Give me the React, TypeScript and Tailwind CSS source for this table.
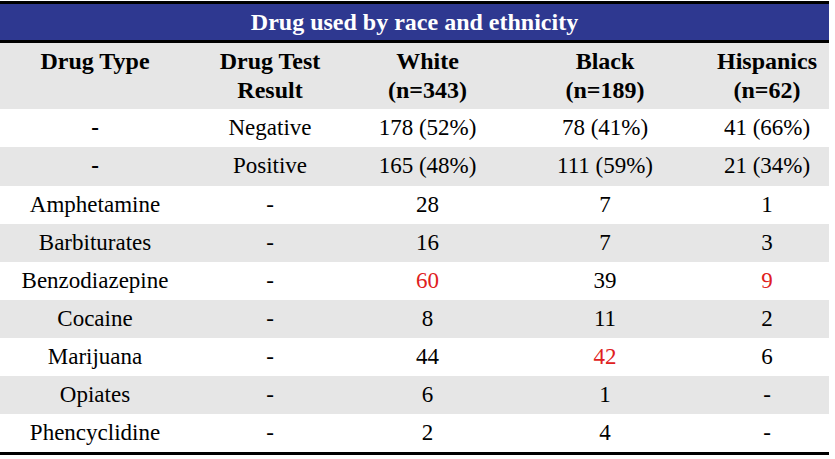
import React from "react";

type Cell = string | { v: string; red?: boolean; bold?: boolean };

const rows: { cells: Cell[]; shade: boolean; tall?: boolean }[] = [
    { cells: [{ v: "-", bold: true }, "Negative", "178 (52%)", "78 (41%)", "41 (66%)"], shade: false },
    { cells: [{ v: "-", bold: true }, "Positive", "165 (48%)", "111 (59%)", "21 (34%)"], shade: true, tall: true },
    { cells: ["Amphetamine", "-", "28", "7", "1"], shade: false },
    { cells: ["Barbiturates", "-", "16", "7", "3"], shade: true },
    { cells: ["Benzodiazepine", "-", { v: "60", red: true }, "39", { v: "9", red: true }], shade: false },
    { cells: ["Cocaine", "-", "8", "11", "2"], shade: true },
    { cells: ["Marijuana", "-", "44", { v: "42", red: true }, "6"], shade: false },
    { cells: ["Opiates", "-", "6", "1", "-"], shade: true },
    { cells: ["Phencyclidine", "-", "2", "4", "-"], shade: false },
];

const cols = "grid grid-cols-[190px_160px_155px_200px_124px]";

export default function App() {
    return (
        <div className="w-[835px] h-[459px] bg-white font-['Liberation_Serif',serif] text-black">
            <div className="w-[829px] mt-[1px] border-t-[3px] border-b-[3px] border-black">
                <div className="h-[39px] bg-[#2e3890] border-b-[3px] border-black flex items-center justify-center text-white text-[24px] font-bold">
                    Drug used by race and ethnicity
                </div>
                <div className={`${cols} h-[66px] bg-[#e6e6e6] text-[24px] font-bold leading-[29px] text-center pt-[4px]`}>
                    <div>Drug Type</div>
                    <div>
                        Drug Test
                        <br />
                        Result
                    </div>
                    <div>
                        White
                        <br />
                        (n=343)
                    </div>
                    <div>
                        Black
                        <br />
                        (n=189)
                    </div>
                    <div>
                        Hispanics
                        <br />
                        (n=62)
                    </div>
                </div>
                {rows.map((row, i) => (
                    <div
                        key={i}
                        className={`${cols} ${row.tall ? "h-[39px]" : "h-[38px]"} items-center text-center text-[23px] ${row.shade ? "bg-[#e6e6e6]" : "bg-white"}`}
                    >
                        {row.cells.map((c, j) => {
                            const v = typeof c === "string" ? c : c.v;
                            const red = typeof c !== "string" && c.red;
                            const bold = typeof c !== "string" && c.bold;
                            return (
                                <div key={j} className={`${red ? "text-[#e02020]" : ""} ${bold ? "font-bold" : ""}`}>
                                    {v}
                                </div>
                            );
                        })}
                    </div>
                ))}
            </div>
        </div>
    );
}
